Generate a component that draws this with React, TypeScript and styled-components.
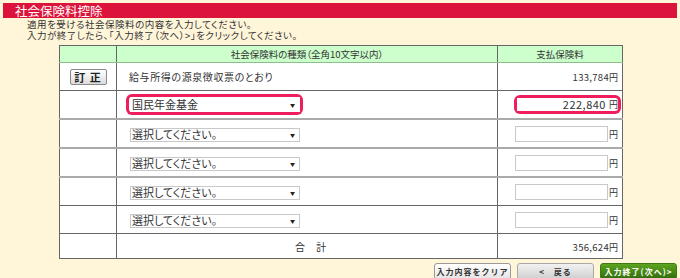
import React from 'react';
import styled, { createGlobalStyle } from 'styled-components';

const GlobalStyle = createGlobalStyle`
  html, body {
    margin: 0;
    padding: 0;
    background: #fff5d9;
    font-family: 'Noto Sans CJK JP', 'Noto Sans', sans-serif;
    color: #333;
  }
`;

const Page = styled.div`
  width: 680px;
  height: 278px;
  overflow: hidden;
  padding-top: 3px;
  box-sizing: border-box;
`;

const TitleBar = styled.div`
  margin: 0 3px;
  height: 15px;
  background: #dc143c;
  color: #fff;
  font-size: 12.5px;
  line-height: 15px;
  padding-left: 12px;
`;

const Lead = styled.div`
  margin-top: 2px;
  padding-left: 27px;
`;

const LeadLine = styled.div`
  height: 10.5px;
  font-family: 'Liberation Sans', 'Noto Sans CJK JP', sans-serif;
  font-size: 9.5px;
  line-height: 10.5px;
  color: #333;
  font-feature-settings: 'palt';
  letter-spacing: 0.5px;
`;

const Grid = styled.table`
  margin: 4px 0 0 59px;
  width: 564px;
  border-collapse: collapse;
  table-layout: fixed;
  background: #fff;
  border: 1px solid #666;
`;

const Head = styled.th`
  height: 16px;
  padding: 0;
  background: #ccffcc;
  border-left: 1px solid #666;
  border-bottom: 1px solid #8abf8a;
  font-size: 9.5px;
  font-weight: normal;
  color: #333;
  text-align: center;
  font-feature-settings: 'palt';
`;

const Cell = styled.td<{ $align?: string; $soft?: boolean; $h?: number }>`
  height: ${(p) => p.$h ?? 27}px;
  padding: 0 4px 0 12px;
  border-left: 1px solid #666;
  border-bottom: ${(p) => (p.$soft ? '2px solid #aaa' : '1px solid #666')};
  text-align: ${(p) => p.$align ?? 'left'};
  font-size: 10px;
  color: #333;
  white-space: nowrap;
  font-feature-settings: 'palt';
  letter-spacing: 0.6px;
`;

const MarkCell = styled(Cell)`
  padding: 0;
  text-align: center;
`;

const FixButton = styled.button`
  width: 37px;
  height: 16px;
  margin-top: 1px;
  padding: 0;
  border: 1px solid #8a8a8a;
  border-radius: 2px;
  background: linear-gradient(#ffffff, #dcdcdc);
  font-family: inherit;
  font-size: 11px;
  font-weight: bold;
  letter-spacing: 1px;
  color: #222;
  line-height: 13px;
`;

const Highlight = styled.span`
  display: inline-flex;
  align-items: center;
  border-radius: 3px;
  box-shadow: 0 0 0 3px #ef1d5b;
  background: #fff;
`;

const Picker = styled.span<{ $dark?: boolean }>`
  display: inline-flex;
  align-items: center;
  justify-content: space-between;
  box-sizing: border-box;
  width: 170px;
  height: ${(p) => (p.$dark ? 15 : 14)}px;
  padding: 0 4px 0 1px;
  margin-left: 1px;
  border: 1px solid ${(p) => (p.$dark ? '#fff' : '#c8c8c8')};
  background: #fff;
  font-size: 11px;
  line-height: 13px;
  letter-spacing: 0;
  color: #333;
  vertical-align: middle;

  &::after {
    content: '▼';
    font-size: 5px;
    color: #222;
  }
`;

const Amount = styled.span`
  display: inline-flex;
  align-items: center;
  gap: 1px;
  vertical-align: middle;
`;

const AmountBox = styled.span<{ $small?: boolean }>`
  display: inline-block;
  box-sizing: border-box;
  width: ${(p) => (p.$small ? 91 : 93)}px;
  height: ${(p) => (p.$small ? 13 : 16)}px;
  border: 1px solid ${(p) => (p.$small ? '#fff' : '#c8c8c8')};
  background: #fff;
  text-align: right;
  font-size: 11px;
  line-height: 11px;
  padding-right: 1px;
  color: #333;
  letter-spacing: 0.5px;
`;

const Yen = styled.span`
  font-size: 9px;
  letter-spacing: 0;
  color: #333;
`;

const Figure = styled.span`
  font-size: 9.5px;
  letter-spacing: 0.3px;
`;

const Actions = styled.div`
  display: flex;
  justify-content: flex-end;
  gap: 6px;
  margin-top: 4px;
  padding-right: 3px;
`;

const ActionButton = styled.button<{ $kind: 'plain' | 'back' | 'next' }>`
  width: 77px;
  height: 17px;
  padding: 0;
  border-radius: 3px;
  font-family: inherit;
  font-size: 8px;
  font-weight: bold;
  letter-spacing: 1px;
  line-height: 15px;
  white-space: nowrap;
  border: 1px solid
    ${(p) => (p.$kind === 'next' ? '#3e7a12' : p.$kind === 'back' ? '#a8a8a8' : '#9a9a9a')};
  color: ${(p) => (p.$kind === 'next' ? '#fff' : '#333')};
  background: ${(p) =>
    p.$kind === 'next'
      ? 'linear-gradient(#5da41f, #2f6d0b)'
      : p.$kind === 'back'
      ? 'linear-gradient(#f2f2f2, #cfcfcf)'
      : 'linear-gradient(#ffffff, #e4e4e4)'};
`;

const blankRows = [0, 1, 2, 3];

export default function App() {
  return (
    <>
      <GlobalStyle />
      <Page>
        <TitleBar>社会保険料控除</TitleBar>
        <Lead>
          <LeadLine>適用を受ける社会保険料の内容を入力してください。</LeadLine>
          <LeadLine>入力が終了したら、「入力終了（次へ）&gt;」をクリックしてください。</LeadLine>
        </Lead>
        <Grid>
          <colgroup>
            <col style={{ width: 57 }} />
            <col style={{ width: 381 }} />
            <col style={{ width: 125 }} />
          </colgroup>
          <thead>
            <tr>
              <Head />
              <Head>社会保険料の種類（全角10文字以内）</Head>
              <Head>支払保険料</Head>
            </tr>
          </thead>
          <tbody>
            <tr>
              <MarkCell>
                <FixButton>訂 正</FixButton>
              </MarkCell>
              <Cell>給与所得の源泉徴収票のとおり</Cell>
              <Cell $align="right">
                <Figure>133,784</Figure>
                <Yen>円</Yen>
              </Cell>
            </tr>
            <tr>
              <MarkCell $soft />
              <Cell $soft>
                <Highlight>
                  <Picker $dark>国民年金基金</Picker>
                </Highlight>
              </Cell>
              <Cell $soft $align="right">
                <Highlight>
                  <Amount>
                    <AmountBox $small>222,840</AmountBox>
                    <Yen>円</Yen>
                  </Amount>
                </Highlight>
              </Cell>
            </tr>
            {blankRows.map((i) => (
              <tr key={i}>
                <MarkCell $soft={i < 2} />
                <Cell $soft={i < 2}>
                  <Picker>選択してください。</Picker>
                </Cell>
                <Cell $soft={i < 2} $align="right">
                  <Amount>
                    <AmountBox />
                    <Yen>円</Yen>
                  </Amount>
                </Cell>
              </tr>
            ))}
            <tr>
              <MarkCell $h={24} />
              <Cell $h={24} $align="center">
                合　計
              </Cell>
              <Cell $h={24} $align="right">
                <Figure>356,624</Figure>
                <Yen>円</Yen>
              </Cell>
            </tr>
          </tbody>
        </Grid>
        <Actions>
          <ActionButton $kind="plain">入力内容をクリア</ActionButton>
          <ActionButton $kind="back">&lt;　戻る</ActionButton>
          <ActionButton $kind="next">入力終了(次へ)&gt;</ActionButton>
        </Actions>
      </Page>
    </>
  );
}
